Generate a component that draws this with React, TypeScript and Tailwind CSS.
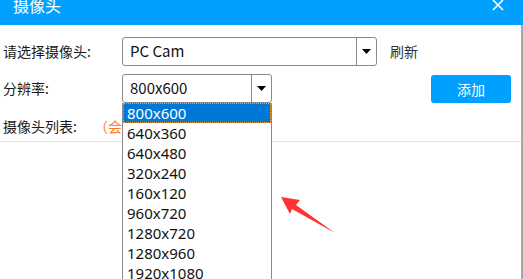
import React from 'react';

const resolutions = [
  '800x600',
  '640x360',
  '640x480',
  '320x240',
  '160x120',
  '960x720',
  '1280x720',
  '1280x960',
  '1920x1080',
  '2560x1440',
];

const Caret = () => (
  <svg width="9" height="5" viewBox="0 0 9 5">
    <path d="M0 0h9L4.5 5z" fill="#000" />
  </svg>
);

const SelectBox: React.FC<{ value: string; width: string }> = ({ value, width }) => (
  <div className={`flex h-[29px] ${width} items-stretch rounded-[3px] border border-[#8a8a8a] bg-white`}>
    <div className="flex flex-1 items-center pl-[7px] text-[15px] text-[#111]">{value}</div>
    <div className="flex w-[20px] items-center justify-center border-l border-[#8a8a8a]">
      <Caret />
    </div>
  </div>
);

export default function App() {
  return (
    <div
      className="relative h-[279px] w-[523px] overflow-hidden bg-white"
      style={{ fontFamily: '"Noto Sans", "Noto Sans CJK SC", sans-serif' }}
    >
      {/* title bar */}
      <div className="flex h-[25px] items-start justify-between overflow-hidden bg-[#00a1fe] pl-[13px] pr-[19px] text-white">
        <span className="-mt-[6px] text-[16px] leading-[22px]" style={{ fontFamily: '"Noto Sans CJK SC", sans-serif' }}>
          摄像头
        </span>
        <svg width="12" height="12" viewBox="0 0 12 12" className="-mt-[1px]">
          <path d="M1 1l10 10M11 1L1 11" stroke="#fff" strokeWidth="1.6" />
        </svg>
      </div>

      <div
        className="flex h-[254px] flex-col border-r-2 border-[#a7a7a7] text-[14px] text-[#1a1a1a]"
        style={{ fontFamily: '"Noto Sans CJK SC", sans-serif' }}
      >
        {/* camera row */}
        <div className="mt-[12px] flex items-center">
          <span className="w-[122px] pl-[3px]">请选择摄像头:</span>
          <SelectBox value="PC Cam" width="w-[255px]" />
          <span className="ml-[13px] text-[#333]">刷新</span>
        </div>

        {/* resolution row */}
        <div className="mt-[8px] flex items-center">
          <span className="w-[122px] pl-[3px]">分辨率:</span>
          <SelectBox value="800x600" width="w-[150px]" />
          <button className="ml-[159px] mt-[1px] h-[28px] w-[80px] rounded-[3px] bg-[#00a1fe] text-[14px] text-white">
            添加
          </button>
        </div>

        {/* list row */}
        <div className="mt-[9px] flex h-[30px] items-center border-b border-[#e3e3e3]">
          <span className="w-[94px] pl-[3px]">摄像头列表:</span>
          <span className="text-[#ff7a1a]">（会自动保存）</span>
        </div>
      </div>

      {/* open dropdown list */}
      <div className="absolute left-[122px] top-[103px] w-[150px] border-x border-[#8a8a8a] bg-white">
        {resolutions.map((r, i) => (
          <div
            key={r}
            className={
              i === 0
                ? 'h-[20px] border border-dotted border-[#f0a040] bg-[#0078d7] pl-[3px] text-[15px] leading-[18px] text-white'
                : 'h-[20px] pl-[4px] text-[15px] leading-[20px] text-[#111]'
            }
            style={{ fontFamily: '"Noto Sans", sans-serif' }}
          >
            {r}
          </div>
        ))}
      </div>

      {/* red arrow annotation */}
      <svg className="absolute left-0 top-0" width="523" height="279" viewBox="0 0 523 279">
        <polygon points="281,197 300,200 296,205 335,233 292,209 290,214" fill="#ff3333" />
      </svg>
    </div>
  );
}
